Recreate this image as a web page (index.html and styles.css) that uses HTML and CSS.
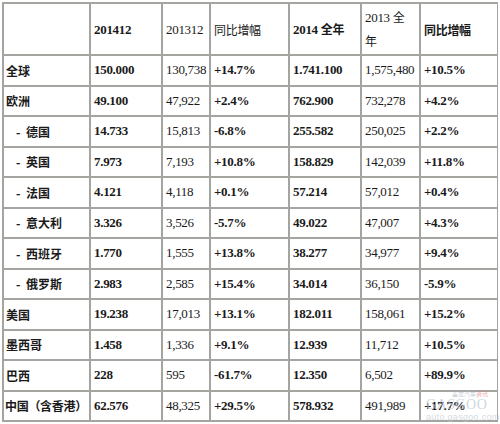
FILE: index.html
```html
<!DOCTYPE html>
<html>
<head>
  <meta charset="utf-8">
  <title>销量</title>
  <link rel="stylesheet" href="styles.css">
</head>
<body>
<!-- 销量表 -->
<table class="sales">
  <colgroup>
    <col class="c1"><col class="c2"><col class="c3"><col class="c4"><col class="c5"><col class="c6"><col class="c7">
  </colgroup>
  <tr class="head">
    <td></td>
    <td class="b">201412</td>
    <td>201312</td>
    <td class="cn">同比增幅</td>
    <td class="b">2014 <span class="cn">全年</span></td>
    <td>2013 <span class="cn">全</span><br><span class="cn">年</span></td>
    <td class="b cn">同比增幅</td>
  </tr>
  <tr>
    <td class="name">全球</td><td class="b">150.000</td><td>130,738</td><td class="b">+14.7%</td><td class="b">1.741.100</td><td>1,575,480</td><td class="b">+10.5%</td>
  </tr>
  <tr>
    <td class="name">欧洲</td><td class="b">49.100</td><td>47,922</td><td class="b">+2.4%</td><td class="b">762.900</td><td>732,278</td><td class="b">+4.2%</td>
  </tr>
  <tr>
    <td class="name sub"><span class="dash">-</span>德国</td><td class="b">14.733</td><td>15,813</td><td class="b">-6.8%</td><td class="b">255.582</td><td>250,025</td><td class="b">+2.2%</td>
  </tr>
  <tr>
    <td class="name sub"><span class="dash">-</span>英国</td><td class="b">7.973</td><td>7,193</td><td class="b">+10.8%</td><td class="b">158.829</td><td>142,039</td><td class="b">+11.8%</td>
  </tr>
  <tr>
    <td class="name sub"><span class="dash">-</span>法国</td><td class="b">4.121</td><td>4,118</td><td class="b">+0.1%</td><td class="b">57.214</td><td>57,012</td><td class="b">+0.4%</td>
  </tr>
  <tr>
    <td class="name sub"><span class="dash">-</span>意大利</td><td class="b">3.326</td><td>3,526</td><td class="b">-5.7%</td><td class="b">49.022</td><td>47,007</td><td class="b">+4.3%</td>
  </tr>
  <tr>
    <td class="name sub"><span class="dash">-</span>西班牙</td><td class="b">1.770</td><td>1,555</td><td class="b">+13.8%</td><td class="b">38.277</td><td>34,977</td><td class="b">+9.4%</td>
  </tr>
  <tr>
    <td class="name sub"><span class="dash">-</span>俄罗斯</td><td class="b">2.983</td><td>2,585</td><td class="b">+15.4%</td><td class="b">34.014</td><td>36,150</td><td class="b">-5.9%</td>
  </tr>
  <tr>
    <td class="name">美国</td><td class="b">19.238</td><td>17,013</td><td class="b">+13.1%</td><td class="b">182.011</td><td>158,061</td><td class="b">+15.2%</td>
  </tr>
  <tr>
    <td class="name">墨西哥</td><td class="b">1.458</td><td>1,336</td><td class="b">+9.1%</td><td class="b">12.939</td><td>11,712</td><td class="b">+10.5%</td>
  </tr>
  <tr>
    <td class="name">巴西</td><td class="b">228</td><td>595</td><td class="b">-61.7%</td><td class="b">12.350</td><td>6,502</td><td class="b">+89.9%</td>
  </tr>
  <tr>
    <td class="name long">中国（含香港）</td><td class="b">62.576</td><td>48,325</td><td class="b">+29.5%</td><td class="b">578.932</td><td>491,989</td><td class="b">+17.7%</td>
  </tr>
</table>

<!-- 水印 -->
<div class="mark">
  <span class="mark-cn">盖世汽车<em>资讯</em></span>
  <span class="mark-logo">GASGOO</span>
  <span class="mark-url">auto.gasgoo.com</span>
</div>
</body>
</html>
```

FILE: styles.css
```css
/* 기본 */
body { margin: 2px; background: #fff; color: #1a1a1a; font-family: "Liberation Serif", "Noto Sans CJK SC", serif; font-size: 13px; }

/* 표 */
.sales { border-collapse: collapse; table-layout: fixed; width: 497px; }
.sales td { border: 2px solid #a4a4a0; padding: 0 0 0 3px; height: 28.5px; text-align: left; vertical-align: middle; white-space: nowrap; letter-spacing: -0.3px; }
.sales .head td { height: 50px; line-height: 23px; }
.c1 { width: 87px; } .c2 { width: 72px; } .c3 { width: 48px; } .c4 { width: 79px; }
.c5 { width: 72px; } .c6 { width: 59px; } .c7 { width: 78px; }
.sales .b { font-weight: bold; }
.sales .cn { font-family: "Noto Sans CJK SC", sans-serif; font-size: 12px; }
.sales .name { font-family: "Noto Sans CJK SC", sans-serif; font-weight: bold; font-size: 12px; padding-left: 2px; letter-spacing: 0; }
.sales .name.long { padding-left: 1px; letter-spacing: -0.3px; }
.sales .sub { padding-left: 12px; }
.sales .dash { display: inline-block; width: 10px; }

/* 워터마크 */
.mark { position: absolute; left: 426px; top: 390px; width: 74px; font-family: "Liberation Sans", sans-serif; opacity: 0.7; }
.mark-cn { display: block; margin-left: 26px; font-family: "Noto Sans CJK SC", sans-serif; font-size: 6px; line-height: 8px; color: #b0b8c0; }
.mark-cn em { font-style: normal; color: #e08080; }
.mark-logo { display: block; font-size: 14px; line-height: 14px; letter-spacing: 0.5px; color: #b9c6d2; font-family: "Liberation Serif", serif; }
.mark-url { display: block; font-size: 9px; line-height: 10px; color: #c4ccd4; letter-spacing: 0.3px; }
```
